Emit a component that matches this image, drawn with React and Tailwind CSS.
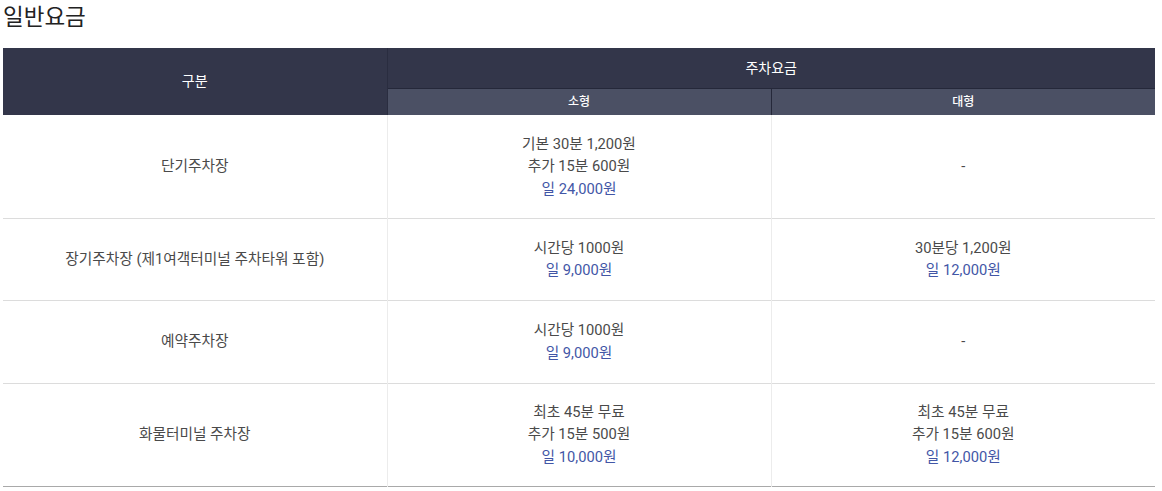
import React from 'react';

const rows = [
  {
    name: '단기주차장',
    h: 'h-[103px]',
    small: [['기본 30분 1,200원'], ['추가 15분 600원'], ['일 24,000원', true]],
    large: null,
  },
  {
    name: '장기주차장 (제1여객터미널 주차타워 포함)',
    h: 'h-[82px]',
    small: [['시간당 1000원'], ['일 9,000원', true]],
    large: [['30분당 1,200원'], ['일 12,000원', true]],
  },
  {
    name: '예약주차장',
    h: 'h-[83px]',
    small: [['시간당 1000원'], ['일 9,000원', true]],
    large: null,
  },
  {
    name: '화물터미널 주차장',
    h: 'h-[103px]',
    small: [['최초 45분 무료'], ['추가 15분 500원'], ['일 10,000원', true]],
    large: [['최초 45분 무료'], ['추가 15분 600원'], ['일 12,000원', true]],
  },
];

function Fee({ lines }) {
  if (!lines) return <span>-</span>;
  return lines.map(([text, day], i) => (
    <p key={i} className={day ? 'text-[#4256a6]' : ''}>
      {text}
    </p>
  ));
}

export default function App() {
  return (
    <div className="bg-white w-[1162px] h-[491px] px-[3px] pt-[2px] font-['Roboto','Noto_Sans_CJK_KR',sans-serif] text-[#4a4a4a]">
      <h2 className="text-[22.5px] leading-[30px] text-[#222] font-normal">일반요금</h2>
      <table className="mt-[16px] w-[1152px] border-collapse text-[14.7px] leading-[22.5px] table-fixed font-normal">
        <colgroup>
          <col className="w-[384px]" />
          <col className="w-[384px]" />
          <col className="w-[384px]" />
        </colgroup>
        <thead className="text-white">
          <tr className="bg-[#33364a]">
            <th rowSpan={2} className="font-normal text-[14px] border-r border-[#2a2d40]">구분</th>
            <th colSpan={2} className="font-normal text-[14px] h-[40px] border-b border-[#25283a]">주차요금</th>
          </tr>
          <tr className="bg-[#4b5064]">
            <th className="font-medium text-[12px] h-[27px] border-r border-[#25283a]">소형</th>
            <th className="font-medium text-[12px] h-[27px]">대형</th>
          </tr>
        </thead>
        <tbody>
          {rows.map((r, i) => (
            <tr
              key={i}
              className={`${r.h} ${i === rows.length - 1 ? 'border-b border-[#a9a9a9]' : 'border-b border-[#dcdcdc]'}`}
            >
              <td className="text-center border-r border-[#ececec]">{r.name}</td>
              <td className="text-center border-r border-[#ececec]">
                <Fee lines={r.small} />
              </td>
              <td className="text-center">
                <Fee lines={r.large} />
              </td>
            </tr>
          ))}
        </tbody>
      </table>
    </div>
  );
}
